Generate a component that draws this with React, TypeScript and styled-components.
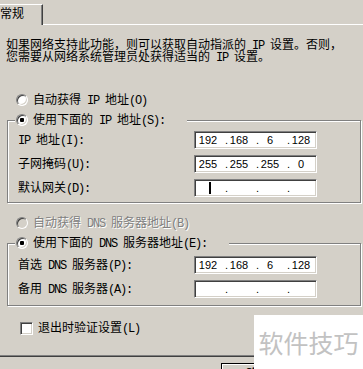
import React from "react";
import styled, { createGlobalStyle } from "styled-components";

const GlobalStyle = createGlobalStyle`
  html, body { margin: 0; padding: 0; background: #d4d0c8; }
  body { width: 363px; height: 369px; overflow: hidden; }
`;

const Window = styled.div`
  position: relative;
  width: 363px;
  height: 369px;
  overflow: hidden;
  background: #d4d0c8;
  font-family: "Noto Sans CJK SC", "Noto Sans", sans-serif;
  font-size: 12px;
  color: #000;
  display: flex;
  flex-direction: column;
`;

const TabStrip = styled.div`
  display: flex;
  flex: 0 0 25px;
  height: 25px;
`;

const ActiveTab = styled.div`
  margin-top: 4px;
  width: 43px;
  height: 21px;
  box-sizing: border-box;
  border-top: 1px solid #fff;
  border-right: 1px solid #404040;
  box-shadow: inset -1px 0 0 #808080;
  line-height: 16px;
  white-space: nowrap;
`;

const TabFill = styled.div`
  flex: 1;
  box-sizing: border-box;
  border-bottom: 1px solid #fff;
`;

const Panel = styled.div`
  flex: 0 0 332px;
  height: 332px;
  box-sizing: border-box;
  border-bottom: 1px solid #404040;
  box-shadow: inset 0 -1px 0 #808080;
  display: flex;
  flex-direction: column;
  align-items: flex-start;
`;

const Intro = styled.div`
  margin: 13px 0 0 6px;
  display: flex;
  flex-direction: column;
`;

const IntroLine = styled.div`
  height: 12px;
  line-height: 12px;
  white-space: nowrap;
`;

const Latin = styled.span`
  font-family: "Liberation Mono", monospace;
  letter-spacing: -1.2px;
`;

const T: React.FC<{ text: string }> = ({ text }) => {
  const parts = text.split(/([\x00-\x7f]+)/);
  return (
    <>
      {parts.map((p, i) =>
        p === "" ? null : /[\x00-\x7f]/.test(p) ? (
          <Latin key={i}>{p}</Latin>
        ) : (
          <span key={i}>{p}</span>
        )
      )}
    </>
  );
};

const OptionRow = styled.div<{ $top: number; $left: number }>`
  display: flex;
  align-items: center;
  gap: 5px;
  height: 14px;
  margin: ${(p) => p.$top}px 0 0 ${(p) => p.$left}px;
  white-space: nowrap;
`;

const Label = styled.span<{ $disabled?: boolean }>`
  color: ${(p) => (p.$disabled ? "#808080" : "#000")};
  text-shadow: ${(p) => (p.$disabled ? "1px 1px 0 #fff" : "none")};
  line-height: 14px;
`;

const Radio = styled.span<{ $checked?: boolean; $disabled?: boolean }>`
  position: relative;
  flex: 0 0 12px;
  width: 12px;
  height: 12px;
  box-sizing: border-box;
  border-radius: 50%;
  border: 1px solid;
  border-color: #808080 #fff #fff #808080;
  background: ${(p) => (p.$disabled ? "#d4d0c8" : "#fff")};
  box-shadow: inset 1px 1px 0 #404040, inset -1px -1px 0 #d4d0c8;
  &::after {
    content: "";
    display: ${(p) => (p.$checked ? "block" : "none")};
    position: absolute;
    left: 3px;
    top: 3px;
    width: 4px;
    height: 4px;
    border-radius: 1px;
    background: #000;
  }
`;

const Checkbox = styled.span`
  flex: 0 0 13px;
  width: 13px;
  height: 13px;
  box-sizing: border-box;
  border: 1px solid;
  border-color: #808080 #fff #fff #808080;
  background: #fff;
  box-shadow: inset 1px 1px 0 #404040, inset -1px -1px 0 #d4d0c8;
`;

const GroupBox = styled.div<{ $padBottom: number }>`
  margin: 13px 0 0 7px;
  width: 354px;
  box-sizing: border-box;
  border: 1px solid #808080;
  box-shadow: inset 1px 1px 0 #fff, 1px 1px 0 #fff;
  padding-bottom: ${(p) => p.$padBottom}px;
  display: flex;
  flex-direction: column;
  align-items: flex-start;
`;

const Legend = styled.div`
  display: flex;
  align-items: center;
  gap: 5px;
  height: 14px;
  margin: -8px 0 0 7px;
  padding: 0 22px 0 1px;
  background: #d4d0c8;
  white-space: nowrap;
`;

const Rows = styled.div<{ $top: number }>`
  display: flex;
  flex-direction: column;
  gap: 6px;
  padding-top: ${(p) => p.$top}px;
`;

const Row = styled.div`
  display: grid;
  grid-template-columns: 176px 123px;
  align-items: center;
  height: 18px;
  padding-left: 10px;
  white-space: nowrap;
`;

const IpField = styled.div`
  height: 18px;
  box-sizing: border-box;
  border: 1px solid;
  border-color: #808080 #fff #fff #808080;
  box-shadow: inset 1px 1px 0 #404040, inset -1px -1px 0 #d4d0c8;
  background: #fff;
  padding: 1px;
  display: grid;
  grid-template-columns: 24px 7px 24px 7px 24px 7px 24px;
  align-items: center;
  font-family: "Liberation Sans", Arial, sans-serif;
  font-size: 11px;
  line-height: 14px;
`;

const Octet = styled.span`
  text-align: center;
  display: flex;
  justify-content: center;
  align-items: center;
  height: 14px;
`;

const Dot = styled.span`
  padding-left: 5px;
  overflow: visible;
`;

const Caret = styled.span`
  width: 2px;
  height: 12px;
  background: #000;
  margin-left: 4px;
`;

const IpInput: React.FC<{ value?: string[]; caret?: boolean }> = ({ value, caret }) => {
  const oct = value ?? ["", "", "", ""];
  return (
    <IpField>
      {oct.map((o, i) => (
        <React.Fragment key={i}>
          {i > 0 && <Dot>.</Dot>}
          <Octet>{i === 0 && caret ? <Caret /> : o}</Octet>
        </React.Fragment>
      ))}
    </IpField>
  );
};

const ButtonRow = styled.div`
  display: flex;
  padding-left: 221px;
  margin-top: 6px;
`;

const PushButton = styled.div`
  width: 75px;
  height: 23px;
  box-sizing: border-box;
  border: 1px solid #000;
  box-shadow: inset 1px 1px 0 #fff, inset -1px -1px 0 #404040, inset -2px -2px 0 #808080;
  padding-bottom: 4px;
  display: flex;
  align-items: center;
  justify-content: center;
`;

const Watermark = styled.div`
  position: absolute;
  right: 0;
  bottom: 0;
  width: 109px;
  height: 54px;
  background: #fff;
  color: #c2c2c2;
  font-size: 25px;
  line-height: 30px;
  display: flex;
  align-items: center;
  justify-content: center;
  white-space: nowrap;
`;

export default function App() {
  return (
    <>
      <GlobalStyle />
      <Window>
        <TabStrip>
          <ActiveTab>常规</ActiveTab>
          <TabFill />
        </TabStrip>
        <Panel>
          <Intro>
            <IntroLine>
              <T text="如果网络支持此功能，则可以获取自动指派的 IP 设置。否则，" />
            </IntroLine>
            <IntroLine>
              <T text="您需要从网络系统管理员处获得适当的 IP 设置。" />
            </IntroLine>
          </Intro>

          <OptionRow $top={31} $left={16}>
            <Radio />
            <Label>
              <T text="自动获得 IP 地址(O)" />
            </Label>
          </OptionRow>

          <GroupBox $padBottom={5}>
            <Legend>
              <Radio $checked />
              <Label>
                <T text="使用下面的 IP 地址(S):" />
              </Label>
            </Legend>
            <Rows $top={4}>
              <Row>
                <Label>
                  <T text="IP 地址(I):" />
                </Label>
                <IpInput value={["192", "168", "6", "128"]} />
              </Row>
              <Row>
                <Label>
                  <T text="子网掩码(U):" />
                </Label>
                <IpInput value={["255", "255", "255", "0"]} />
              </Row>
              <Row>
                <Label>
                  <T text="默认网关(D):" />
                </Label>
                <IpInput caret />
              </Row>
            </Rows>
          </GroupBox>

          <OptionRow $top={13} $left={16}>
            <Radio $disabled />
            <Label $disabled>
              <T text="自动获得 DNS 服务器地址(B)" />
            </Label>
          </OptionRow>

          <GroupBox $padBottom={7}>
            <Legend>
              <Radio $checked />
              <Label>
                <T text="使用下面的 DNS 服务器地址(E):" />
              </Label>
            </Legend>
            <Rows $top={6}>
              <Row>
                <Label>
                  <T text="首选 DNS 服务器(P):" />
                </Label>
                <IpInput value={["192", "168", "6", "128"]} />
              </Row>
              <Row>
                <Label>
                  <T text="备用 DNS 服务器(A):" />
                </Label>
                <IpInput />
              </Row>
            </Rows>
          </GroupBox>

          <OptionRow $top={15} $left={20}>
            <Checkbox />
            <Label>
              <T text="退出时验证设置(L)" />
            </Label>
          </OptionRow>
        </Panel>
        <ButtonRow>
          <PushButton>确定</PushButton>
        </ButtonRow>
        <Watermark>软件技巧</Watermark>
      </Window>
    </>
  );
}
